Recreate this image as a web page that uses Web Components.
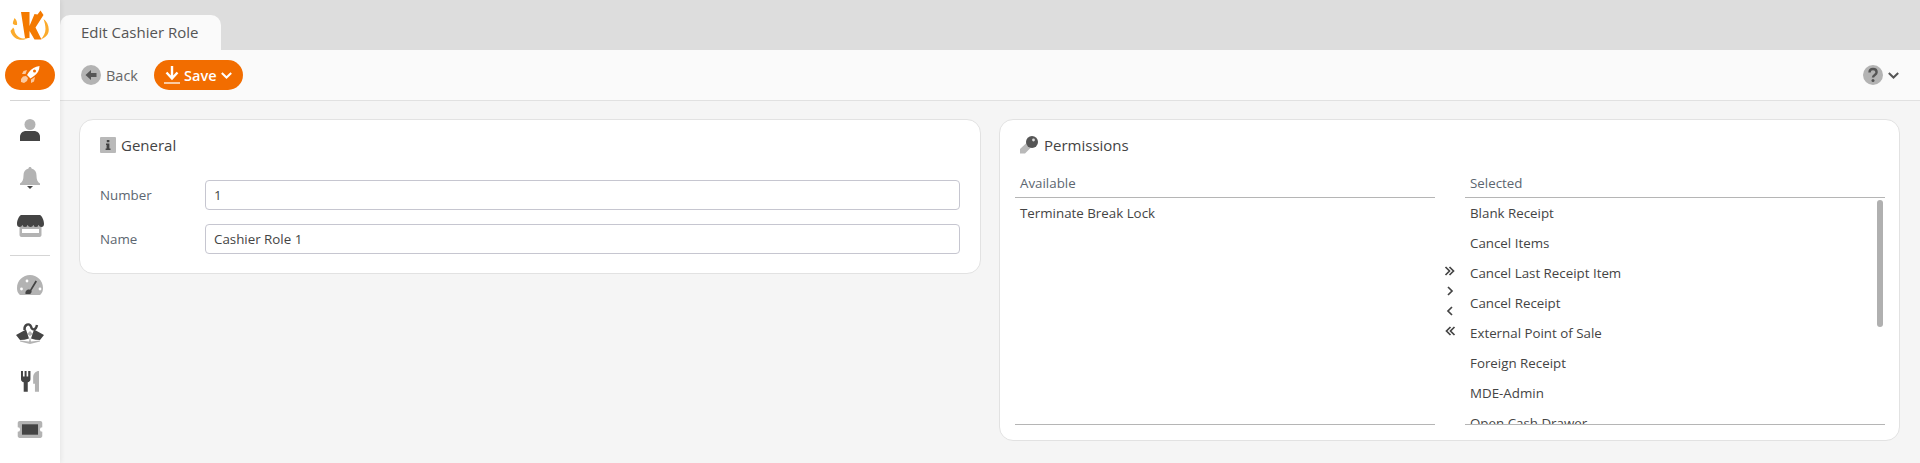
<!DOCTYPE html>
<html><head><meta charset="utf-8"><style>
html,body{margin:0;height:100%;overflow:hidden}
body{font-family:"Open Sans",sans-serif;color:#444}
</style></head><body>
<app-shell>
<app-sidebar slot="side"></app-sidebar>
<tab-bar slot="tabs" label="Edit Cashier Role"></tab-bar>
<tool-bar slot="tools"></tool-bar>
<info-card style="width:902px" icon="info" heading="General" slot="content">
 <form-row label="Number" value="1" first></form-row>
 <form-row label="Name" value="Cashier Role 1"></form-row>
</info-card>
<info-card style="width:901px" icon="key" heading="Permissions" slot="content">
 <dual-list></dual-list>
</info-card>
</app-shell>
<script>
function def(name,html){customElements.define(name,class extends HTMLElement{connectedCallback(){if(this.shadowRoot)return;const r=this.attachShadow({mode:'open'});r.innerHTML=typeof html==='function'?html(this):html;}})}
const D='#444',G='#b3b3b3';
const I={
logo:`<svg width="40" height="31" viewBox="11 10 40 31"><path fill="#fbab2c" d="M11.500 31C12.500 29.500 13.500 29 14 27.500C15 28.500 15.500 29.500 15.500 31C16.500 35 20 38 24 38.500L29 38C24 41.500 14 40.500 11.500 31zM44.500 19C48.500 22 50.500 27 49.500 32C48.500 36 45 38.500 42 39C44.500 36.500 46.500 33 46.500 29C46.500 25.500 45.500 22 44.500 19zM14 24C13.500 22 15 20 15.500 18C17.500 20 18.500 22 18 25C17 25 15 25 14 24zM34 20L37.500 20L34.500 27L32.500 27z"/><path fill="#f47a00" d="M22 12L30.500 12L30.500 26L35.500 14L38.500 14.500L41.500 10.500L44.500 15L36.500 27.500L42.500 39.500L35.500 39.500L30.500 31L30.500 38L26 38z"/></svg>`,
rocket:`<svg width="19" height="18" viewBox="0 0 19 18"><path fill="#fff" d="M18.500 0C14 .5 10.500 2.500 8 6L6 9L9.500 12.500L13 10C16.500 7.500 18.500 4.500 18.500 0z"/><circle cx="13.500" cy="5" r="1.500" fill="#f26d00"/><path fill="#fbc9a0" d="M6 4L2.500 5L1 8L4.500 8zM14 11L10 13.500L10 17L13 15.500zM2 10.500L5 10L7 12L6 15L3 17L0 16L0 13z"/></svg>`,
user:`<svg width="20" height="22" viewBox="0 0 20 22"><circle cx="10" cy="5.500" r="5.500" fill="${G}"/><path fill="${D}" d="M0 22V18C0 14 3 12 6 12H14C17 12 20 14 20 18V22z"/></svg>`,
bell:`<svg width="20" height="22" viewBox="0 0 20 22"><path fill="${G}" d="M10 0C11 0 11.500 .7 11.500 1.500C15 2.500 16.500 5 16.500 8.500C16.500 12.500 17.500 15 20 16.500V18H0V16.500C2.500 15 3.500 12.500 3.500 8.500C3.500 5 5 2.500 8.500 1.500C8.500 .7 9 0 10 0z"/><path fill="${D}" d="M7 19H13L10 22z"/></svg>`,
store:`<svg width="27" height="22" viewBox="0 0 27 22"><path fill="${G}" d="M2.500 11H24.500V20C24.500 21 23.500 22 22.500 22H4.500C3.500 22 2.500 21 2.500 20zM5 14V18H22V14z"/><path fill="${D}" d="M4 0H23C25 1 27 5 27 9C27 11 26 12 24.500 12C23 12 22 11 21.800 10C21.500 11 20.300 12 19 12C17.500 12 16.500 11 16.200 10C16 11 15 12 13.500 12C12 12 11 11 10.800 10C10.500 11 9.500 12 8 12C6.700 12 5.500 11 5.200 10C5 11 4 12 2.500 12C1 12 0 11 0 9C0 5 2 1 4 0z"/></svg>`,
gauge:`<svg width="26" height="20" viewBox="0 0 26 20"><path fill="${G}" d="M13 0C20 0 26 5.500 26 13C26 15.500 25.400 17.500 24 19C23.500 19.600 23 20 22 20H4C3 20 2.500 19.600 2 19C.6 17.500 0 15.500 0 13C0 5.500 6 0 13 0z"/><circle cx="4.500" cy="14" r="1.400" fill="#fff"/><circle cx="10" cy="6" r="1.400" fill="#fff"/><circle cx="23" cy="14" r="1.400" fill="#fff"/><path fill="${D}" d="M18.500 5.500L20 6.500L14.500 15.500C15 17 14 19 12.500 19H8.500C8 17 9 15 11 14.500C11.700 14.300 12.500 14.400 13 14.700z"/></svg>`,
box:`<svg width="28" height="22" viewBox="0 0 28 22"><path fill="${G}" d="M4 18.500L13 19.500L14 15L15 19.500L24 18.500V19.500L14 22L4 19.500zM14 9L17 12L14 14L11 12z"/><path fill="${D}" d="M0 13L10 7.500L13 16.500C10 17.500 7 18 4 18zM28 13L18 7.500L15 16.500C18 17.500 21 18 24 18z"/><path fill="none" stroke="${D}" stroke-width="2.400" d="M8.500 8C8 2.500 13.500 .5 15 4.500C16 8.500 20 8.500 21 3"/></svg>`,
food:`<svg width="18" height="22" viewBox="0 0 20 24"><path fill="${D}" d="M0 1H2.200V7H4V1H6.200V7H8V1H10.500V10C10.500 12 9 13 7.500 13.300V24H3V13.300C1.500 13 0 12 0 10z"/><path fill="${G}" d="M20 1V24H15.500V15H13.500V8C13.500 4 16.500 1 20 1z"/></svg>`,
ticket:`<svg width="26" height="17" viewBox="0 0 26 18"><path fill="${G}" d="M2 0H24C25 0 26 1 26 2V6.500a2.500 2.500 0 0 0 0 5V16C26 17 25 18 24 18H2C1 18 0 17 0 16V11.500a2.500 2.500 0 0 0 0-5V2C0 1 1 0 2 0z"/><rect x="4.500" y="3.500" width="17" height="11" fill="${D}"/></svg>`,
back:`<svg width="20" height="20" viewBox="0 0 20 20"><circle cx="10" cy="10" r="10" fill="${G}"/><path fill="#555" d="M10 5V8H15.500V12H10V15L4.500 10z"/></svg>`,
save:`<svg width="16" height="18" viewBox="0 0 16 18"><path fill="none" stroke="#fff" stroke-width="2.400" d="M8 0V12M2.500 6.500L8 12.500L13.500 6.500"/><rect y="16" width="16" height="2" fill="#fbc9a0"/></svg>`,
chev:c=>`<svg width="11" height="7" viewBox="0 0 11 7"><path fill="none" stroke="${c}" stroke-width="2" d="M.8 1L5.500 5.500L10.200 1"/></svg>`,
help:`<svg width="20" height="20" viewBox="0 0 20 20"><circle cx="10" cy="10" r="10" fill="${G}"/><path fill="none" stroke="#555" stroke-width="2.400" d="M6.500 7.500C6.500 5.500 8 4 10 4S13.600 5.300 13.600 7.200C13.600 10 10 9.800 10 12.500"/><circle cx="10" cy="15.500" r="1.500" fill="#555"/></svg>`,
info:`<svg width="16" height="16" viewBox="0 0 16 16"><rect width="16" height="16" rx="1" fill="#b9b9b9"/><path fill="#444" d="M6.800 3H9.400V5.200H6.800zM6 6.500H9.400V11.500H10.500V13H5.600V11.500H6.600V8H6z"/></svg>`,
key:`<svg width="19" height="18" viewBox="0 0 19 18"><path fill="#b9b9b9" d="M7 6.500L11.500 11L5 17.500H0V13z"/><circle cx="12" cy="6" r="6" fill="#555"/><circle cx="13.500" cy="4" r="1.400" fill="#ddd"/></svg>`
};
def('app-shell',`<style>:host{display:grid;grid-template-columns:60px 1fr;height:463px;background:#f5f5f5}
main{display:flex;flex-direction:column;min-width:0;height:463px}
.content{display:flex;gap:18px;align-items:flex-start;padding:18px 20px 0 19px}</style>
<div><slot name="side"></slot></div><main><slot name="tabs"></slot><slot name="tools"></slot><div class="content"><slot name="content"></slot></div></main>`);
def('app-sidebar',`<style>:host{display:flex;flex-direction:column;align-items:center;width:60px;height:463px;background:#fff;box-shadow:1px 0 5px rgba(0,0,0,.07);position:relative;box-sizing:border-box;padding-top:10px}
.rocket{width:50px;height:30px;margin-top:19px;border-radius:15px;background:#f26d00;display:flex;align-items:center;justify-content:center}
hr{width:40px;border:0;border-top:1px solid #d5d5d5;margin:5px 0 5px}
.i{display:flex;align-items:center;justify-content:center;height:48px;width:60px;flex:none}</style>
${I.logo}
<div class="rocket">${I.rocket}</div>
<hr style="margin-top:10px">
<div class="i">${I.user}</div><div class="i">${I.bell}</div><div class="i">${I.store}</div>
<hr>
<div class="i">${I.gauge}</div><div class="i">${I.box}</div><div class="i">${I.food}</div><div class="i">${I.ticket}</div>`);
def('tab-bar',e=>`<style>:host{display:flex;height:50px;background:#ddd;align-items:flex-end;flex:none}
.t{width:161px;height:35px;box-sizing:border-box;background:#fafafa;border-radius:10px 10px 0 0;font-size:15px;line-height:20px;padding:7px 0 0 21px;color:#555}</style><div class="t">${e.getAttribute('label')}</div>`);
def('tool-bar',`<style>:host{display:flex;height:51px;box-sizing:border-box;flex:none;align-items:center;background:#fafafa;border-bottom:1px solid #e1e1e1;padding:0 21px 0 21px;font-size:14.500px;color:#666}
.back{display:flex;align-items:center;gap:5px;width:73px}
.save{display:flex;align-items:center;margin-left:0;height:30px;width:89px;box-sizing:border-box;padding-left:10px;border-radius:15px;background:#f26d00;color:#fff;font-weight:600;gap:4px}
.save svg:last-child{margin-left:1px}
.r{margin-left:auto;display:flex;align-items:center;gap:5px}</style>
<div class="back">${I.back}<span>Back</span></div>
<div class="save">${I.save}<span>Save</span>${I.chev('#fff')}</div>
<div class="r">${I.help}${I.chev('#555')}</div>`);
def('info-card',e=>`<style>:host{display:block;box-sizing:border-box;background:#fff;border:1px solid #e2e2e2;border-radius:14px;padding:13px 20px 0 20px}
h2{margin:0;font-weight:400;font-size:15px;line-height:24px;color:#444;display:flex;align-items:center;gap:5px}
</style><h2>${I[e.getAttribute('icon')]}<span>${e.getAttribute('heading')}</span></h2><slot></slot>`);
def('form-row',e=>`<style>:host{display:flex;align-items:center;height:30px;font-size:13.330px;color:#5c6670;margin:14px 0 19px 0}
:host([first]){margin:23px 0 0 0}
label{width:105px}.v{flex:1;height:30px;box-sizing:border-box;border:1px solid #c6c6d0;border-radius:4px;line-height:28px;padding-left:8px;color:#444}</style>
<label>${e.getAttribute('label')}</label><div class="v">${e.getAttribute('value')}</div>`);
def('dual-list',`<style>:host{display:grid;grid-template-columns:420px 30px 420px;margin:14px -6px 15px -5px;font-size:13.330px;color:#444}
.col{display:flex;flex-direction:column;height:254px;box-sizing:border-box;position:relative;overflow:hidden;border-bottom:1px solid #b5b5b5}
.h{flex:none;height:27px;line-height:24px;padding-left:5px;border-bottom:1px solid #b5b5b5;color:#5c6670;box-sizing:border-box}
.l{flex:1;overflow:hidden;padding:0 5px;line-height:30px}.l div{height:30px}
.m{display:flex;flex-direction:column;align-items:center;justify-content:center;padding-top:5px}
.m svg{display:block;height:20px}
.bar{position:absolute;right:2px;top:29px;width:6px;height:127px;border-radius:3px;background:#b0b0b0}</style>
<div class="col"><div class="h">Available</div><div class="l"><div>Terminate Break Lock</div></div></div>
<div class="m">
<svg width="14" viewBox="0 0 14 20"><path fill="none" stroke="#444" stroke-width="1.700" d="M2.500 6L6.500 10L2.500 14M6.500 6L10.500 10L6.500 14"/></svg>
<svg width="14" viewBox="0 0 14 20"><path fill="none" stroke="#444" stroke-width="1.700" d="M5 6L9 10L5 14"/></svg>
<svg width="14" viewBox="0 0 14 20"><path fill="none" stroke="#444" stroke-width="1.700" d="M9 6L5 10L9 14"/></svg>
<svg width="14" viewBox="0 0 14 20"><path fill="none" stroke="#444" stroke-width="1.700" d="M7.500 6L3.500 10L7.500 14M11.500 6L7.500 10L11.500 14"/></svg>
</div>
<div class="col"><div class="h">Selected</div><div class="l"><div>Blank Receipt</div><div>Cancel Items</div><div>Cancel Last Receipt Item</div><div>Cancel Receipt</div><div>External Point of Sale</div><div>Foreign Receipt</div><div>MDE-Admin</div><div>Open Cash Drawer</div></div><div class="bar"></div></div>`);
</script>
</body></html>
